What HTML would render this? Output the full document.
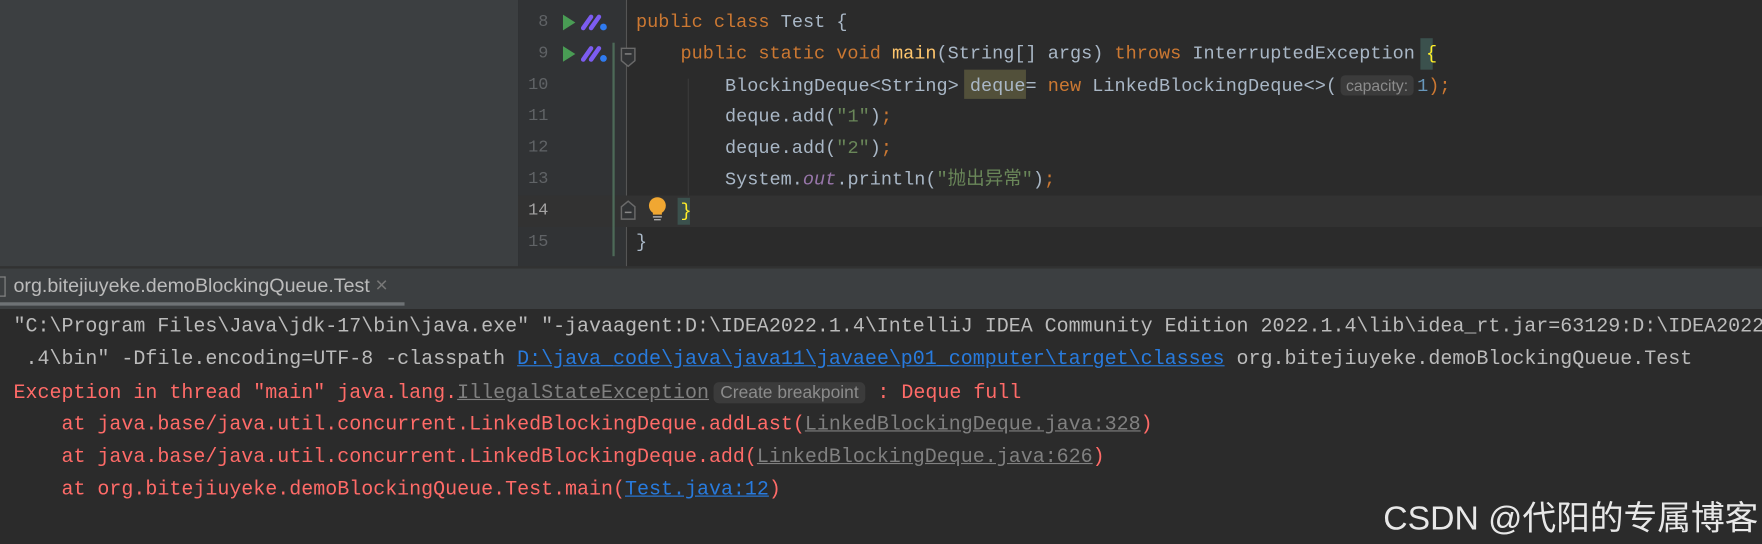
<!DOCTYPE html><html><head><meta charset="utf-8"><style>
body{margin:0;width:1762px;height:543px;overflow:hidden;background:#2b2b2b;position:relative;font-family:"Liberation Mono",monospace}
#w{position:absolute;left:0;top:0;width:1568px;height:484px;transform:scale(1.12372);transform-origin:0 0;overflow:hidden}
.a{position:absolute;white-space:pre}
.ed{font-size:16.5px;color:#a9b7c6;line-height:28px}
.ln{font-size:15px;color:#606366;width:30px;text-align:right;left:458px;line-height:28px}
.k{color:#cc7832}.s{color:#6a8759}.f{color:#ffc66d}.o{color:#9876aa;font-style:italic}.n{color:#6897bb}
.c{font-size:17.8px;color:#bbbbbb;line-height:29px;left:12px}
.r{color:#ff6b68}.u{color:#287bde;text-decoration:underline}.g{color:#808080;text-decoration:underline}
.play{width:0;height:0;border-left:11px solid #499c54;border-top:7px solid transparent;border-bottom:7px solid transparent}
</style></head><body><div id="w">
<div class="a" style="left:0;top:0;width:461px;height:237px;background:#3c3f41"></div>
<div class="a" style="left:461px;top:0;width:96px;height:237px;background:#313335"></div>
<div class="a" style="left:557px;top:0;width:1px;height:237px;background:#555"></div>
<div class="a" style="left:612px;top:70px;width:1px;height:126px;background:#3b3b3b"></div>
<div class="a" style="left:461px;top:174px;width:1301px;height:28px;background:#323232"></div>
<div class="a" style="left:545px;top:38px;width:2px;height:190px;background:#4d6a58"></div>
<div class="a" style="left:603px;top:176px;width:11px;height:24px;background:#3b514d"></div>
<div class="a" style="left:858px;top:62px;width:55px;height:26px;background:#52503a"></div>
<div class="a" style="left:1264px;top:34px;width:11px;height:28px;background:#3b514d"></div>
<div class="a ln" style="top:6px">8</div><div class="a ln" style="top:34px">9</div><div class="a ln" style="top:62px">10</div><div class="a ln" style="top:90px">11</div><div class="a ln" style="top:118px">12</div><div class="a ln" style="top:146px">13</div><div class="a ln" style="top:174px;color:#a4a3a3">14</div><div class="a ln" style="top:202px">15</div>
<div class="a play" style="left:501px;top:13px"></div><div class="a play" style="left:501px;top:41px"></div>
<svg class="a" style="left:516px;top:12px" width="26" height="16"><path d="M3 13L10 3M10 13L17 3" stroke="#7c5cf0" stroke-width="4" stroke-linecap="round"/><circle cx="21" cy="12" r="3" fill="#2f7bf0"/></svg>
<svg class="a" style="left:516px;top:40px" width="26" height="16"><path d="M3 13L10 3M10 13L17 3" stroke="#7c5cf0" stroke-width="4" stroke-linecap="round"/><circle cx="21" cy="12" r="3" fill="#2f7bf0"/></svg>
<svg class="a" style="left:552px;top:42px" width="14" height="18"><path d="M1 1H13V12L7 17L1 12Z" fill="#313335" stroke="#6a6a6a" stroke-width="1.3"/><path d="M4 6H10" stroke="#888" stroke-width="1.3"/></svg>
<svg class="a" style="left:552px;top:178px" width="14" height="18"><path d="M1 17H13V6L7 1L1 6Z" fill="#313335" stroke="#6a6a6a" stroke-width="1.3"/><path d="M4 11H10" stroke="#888" stroke-width="1.3"/></svg>
<svg class="a" style="left:576px;top:174px" width="18" height="24"><circle cx="9" cy="9" r="7.5" fill="#f0a732"/><rect x="5" y="14" width="8" height="3" fill="#f0a732"/><path d="M5 19H13M6 21.5H12" stroke="#aaa" stroke-width="1.3"/></svg>
<div class="a ed" style="left:566px;top:6px"><span class="k">public class </span>Test {</div>
<div class="a ed" style="left:566px;top:34px">    <span class="k">public static void </span><span class="f">main</span>(String[] args) <span class="k">throws </span>InterruptedException <span style="color:#ffef28">{</span></div>
<div class="a ed" style="left:566px;top:62px">        BlockingDeque&lt;String&gt; deque= <span class="k">new </span>LinkedBlockingDeque&lt;&gt;(<span style="font-family:'Liberation Sans',sans-serif;font-size:14px;color:#8c8c8c;background:#3b3b3b;border-radius:4px;padding:1px 5px;margin:0 3px">capacity:</span><span class="n">1</span><span class="k">);</span></div>
<div class="a ed" style="left:566px;top:90px">        deque.add(<span class="s">"1"</span>)<span class="k">;</span></div>
<div class="a ed" style="left:566px;top:118px">        deque.add(<span class="s">"2"</span>)<span class="k">;</span></div>
<div class="a ed" style="left:566px;top:146px;font-family:'Liberation Mono','Noto Sans CJK SC',monospace">        System.<span class="o">out</span>.println(<span class="s">"抛出异常"</span>)<span class="k">;</span></div>
<div class="a ed" style="left:566px;top:174px">    <span style="color:#ffef28">}</span></div>
<div class="a ed" style="left:566px;top:202px">}</div>
<div class="a" style="left:0;top:237px;width:1762px;height:36px;background:#3c3f41;border-top:2px solid #323232"></div>
<div class="a" style="left:0;top:269px;width:360px;height:3px;background:#6e7275"></div>
<div class="a" style="left:0;top:246px;width:4px;height:16px;border:1px solid #888;border-left:none"></div>
<div class="a" style="left:12px;top:244px;font-family:'Liberation Sans',sans-serif;font-size:17.5px;color:#bbbbbb">org.bitejiuyeke.demoBlockingQueue.Test <span style="color:#777;font-size:19px">×</span></div>
<div class="a c" style="top:277px">"C:\Program Files\Java\jdk-17\bin\java.exe" "-javaagent:D:\IDEA2022.1.4\IntelliJ IDEA Community Edition 2022.1.4\lib\idea_rt.jar=63129:D:\IDEA2022.1</div>
<div class="a c" style="top:306px"> .4\bin" -Dfile.encoding=UTF-8 -classpath <span class="u">D:\java_code\java\java11\javaee\p01_computer\target\classes</span> org.bitejiuyeke.demoBlockingQueue.Test</div>
<div class="a c r" style="top:335px">Exception in thread "main" java.lang.<span class="g">IllegalStateException</span><span style="font-family:'Liberation Sans',sans-serif;font-size:15.5px;color:#8c8c8c;background:#3b3b3b;border-radius:5px;padding:1px 6px;margin-left:4px">Create breakpoint</span> : Deque full</div>
<div class="a c r" style="top:364px">    at java.base/java.util.concurrent.LinkedBlockingDeque.addLast(<span class="g">LinkedBlockingDeque.java:328</span>)</div>
<div class="a c r" style="top:393px">    at java.base/java.util.concurrent.LinkedBlockingDeque.add(<span class="g">LinkedBlockingDeque.java:626</span>)</div>
<div class="a c r" style="top:422px">    at org.bitejiuyeke.demoBlockingQueue.Test.main(<span class="u">Test.java:12</span>)</div>
<div class="a" style="left:1231px;top:436px;font-family:'Liberation Sans','Noto Sans CJK SC',sans-serif;font-size:30px;color:#e8e8e8">CSDN @代阳的专属博客</div>
</div></body></html>
